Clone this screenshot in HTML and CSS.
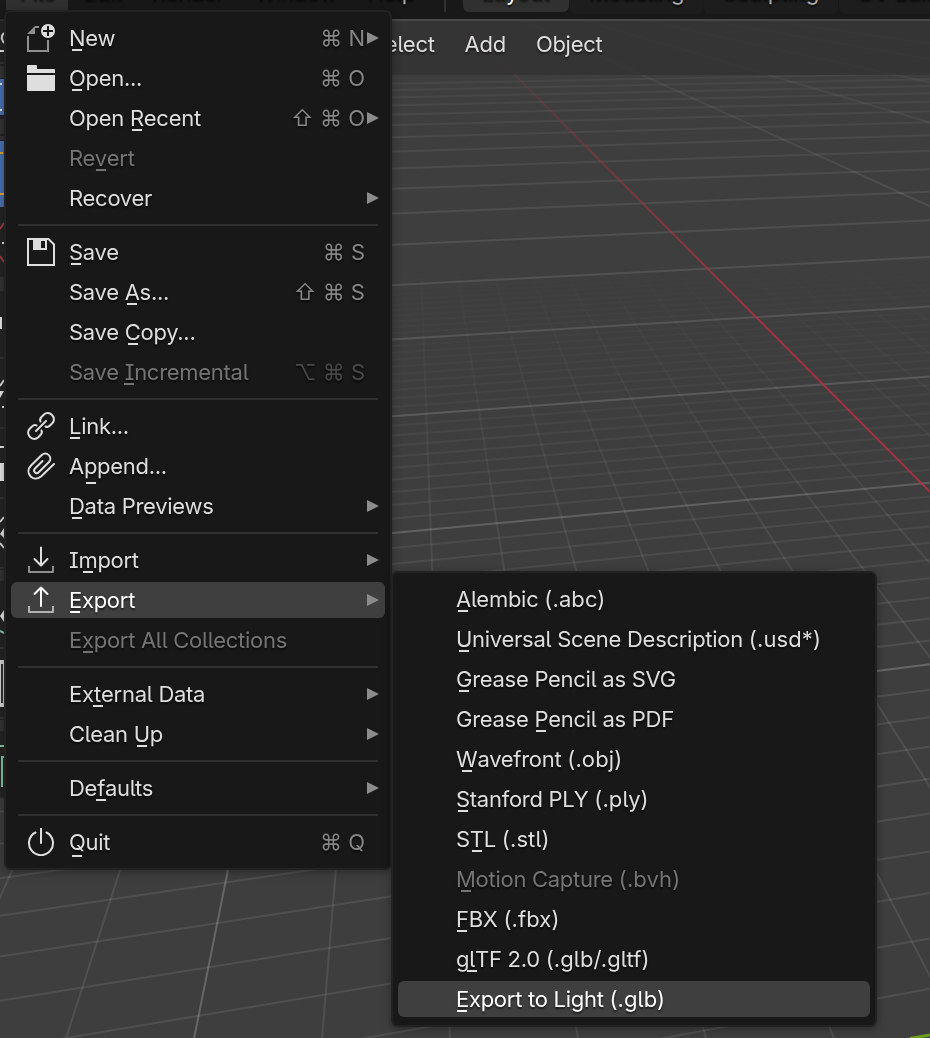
FILE: index.html
```
<!DOCTYPE html>
<html lang="en">
<head>
    <meta charset="UTF-8">
    <meta name="viewport" content="width=device-width, initial-scale=1.0">
    <title>Blender</title>
    <link rel="stylesheet" href="styles.css">
</head>
<body>
    <div class="app">
        <canvas id="grid" class="grid" width="930" height="1038"></canvas>

        <header class="topbar">
            <nav class="topbar-menus">
                <span class="topbar-item active">File</span>
                <span class="topbar-item">Edit</span>
                <span class="topbar-item">Render</span>
                <span class="topbar-item">Window</span>
                <span class="topbar-item">Help</span>
            </nav>
            <nav class="workspaces">
                <span class="tab active">Layout</span>
                <span class="tab">Modeling</span>
                <span class="tab">Sculpting</span>
                <span class="tab">UV Editing</span>
            </nav>
        </header>
        <div class="editor-header">
            <span>Select</span>
            <span>Add</span>
            <span>Object</span>
        </div>

        <!-- Toolbar edge, left of the menu -->
        <svg class="toolbar" width="5" height="850" viewBox="0 19 5 850">
            <path fill="#242424" d="M0 19h5v778H0z"/>
            <path fill="#333" d="M0 19h5v2H0zM0 62h5v2H0zM0 66h5v12H0zM0 119h5v15H0zM0 136h5v4H0zM0 277h5v14H0zM0 357h5v2H0zM0 427h5v2H0zM0 497h5v2H0zM0 567h5v2H0zM0 570h5v11H0zM0 647h5v2H0zM0 717h5v2H0zM0 720h5v11H0zM0 797h5v2H0z"/>
            <path fill="#4772b3" d="M0 79h5v36H0zM0 141h5v66H0z"/>
            <path fill="#e6e6e6" d="M0 83h2v2H0zM0 109h2v2H0zM0 50h4v2H0zM2 242h2v2H2zM0 317h2v12H0zM0 391h4l-4 7zM2 406h2v2H2zM0 446h4v2H0zM0 463h4v18H0zM4 528v10l-4-4zM4 610v12l-4-6z"/>
            <path fill="#e8a020" d="M0 152h3v2H0zM0 193h4v2H0z"/>
            <path fill="none" stroke="#ddd" stroke-width="2" d="M4 33q-3 3-2 6t2 4M0 386l4-6M0 522l4-5M0 543l4 5"/>
            <path fill="none" stroke="#9c3c44" stroke-width="2" d="M0 229l4-6M0 256l4 6"/>
            <path fill="#d0d0d0" d="M0 660h5v47H0z"/>
            <path fill="#333" d="M1 664h2v39H1z"/>
            <path fill="none" stroke="#7fc8a0" stroke-width="2" d="M0 631l4 2M0 746h4M5 757H2v30"/>
        </svg>

        <ul class="menu file-menu">
            <li class="item">
                <svg class="icon" viewBox="0 0 28 28">
                    <path fill="none" stroke="#8f8f8f" stroke-width="2" d="M1 12v15h20V16"/>
                    <path fill="#8f8f8f" d="M0 10l8-8h4v2H8v6z"/>
                    <circle cx="21" cy="7" r="7" fill="#dedede"/>
                    <path stroke="#181818" stroke-width="2" d="M21 2v10M16 7h10"/>
                </svg>
                <span class="label"><u>N</u>ew</span><span class="keys">⌘ N</span><i class="arrow"></i>
            </li>
            <li class="item">
                <svg class="icon" viewBox="0 0 28 28">
                    <path fill="#dedede" d="M1 1h8q1 0 1 1v3h17q1 0 1 1v3H0V2q0-1 1-1zM0 11h28v15q0 1-1 1H1q-1 0-1-1z"/>
                </svg>
                <span class="label"><u>O</u>pen...</span><span class="keys">⌘ O</span>
            </li>
            <li class="item"><span class="label">Open <u>R</u>ecent</span><span class="keys">⇧ ⌘ O</span><i class="arrow"></i></li>
            <li class="item disabled"><span class="label">Re<u>v</u>ert</span></li>
            <li class="item"><span class="label">Recover</span><i class="arrow"></i></li>
            <li class="separator"></li>
            <li class="item">
                <svg class="icon" viewBox="0 0 28 28">
                    <path fill="none" stroke="#dedede" stroke-width="2" d="M1 1h20.500l5.500 5.500V27H1z"/>
                    <path fill="#dedede" fill-rule="evenodd" d="M6 1h14v11H6zM14 3v7h4V3z"/>
                </svg>
                <span class="label"><u>S</u>ave</span><span class="keys">⌘ S</span>
            </li>
            <li class="item"><span class="label">Save <u>A</u>s...</span><span class="keys">⇧ ⌘ S</span></li>
            <li class="item"><span class="label">Save <u>C</u>opy...</span></li>
            <li class="item disabled"><span class="label">Save <u>I</u>ncremental</span><span class="keys">⌥ ⌘ S</span></li>
            <li class="separator"></li>
            <li class="item">
                <svg class="icon line" viewBox="0 0 28 28">
                    <path d="M9 19L19 9M13.500 9.500C12.500 7.500 13 6.500 14.500 5l2.500-2.500C19 .6 22.500.5 25 3s2.400 6 .5 8L23 13.500c-1.500 1.500-3 1.800-4.500 1M14.500 18.500c1 2 .5 3-1 4.500L11 25.500C9 27.400 5.500 27.500 3 25s-2.400-6-.5-8L5 14.500c1.500-1.500 3-1.800 4.500-1"/>
                </svg>
                <span class="label"><u>L</u>ink...</span>
            </li>
            <li class="item">
                <svg class="icon line" viewBox="0 0 28 28">
                    <path d="M15.500 9L8 16.500c-2.600 2.800 1 6.200 3.700 3.700L22 10c4-4.500-2-11.500-7.500-6.800L4 13.500C-3 21 6 31 14 24.500L27 12"/>
                </svg>
                <span class="label">A<u class="low">p</u>pend...</span>
            </li>
            <li class="item"><span class="label"><u>D</u>ata Previews</span><i class="arrow"></i></li>
            <li class="separator"></li>
            <li class="item">
                <svg class="icon line" viewBox="0 0 28 28">
                    <path class="dim" d="M2 20v6h24v-6"/>
                    <path d="M14 1.500V19M7.500 13l6.500 6.500 6.500-6.500"/>
                </svg>
                <span class="label">I<u>m</u>port</span><i class="arrow"></i>
            </li>
            <li class="item active">
                <svg class="icon line" viewBox="0 0 28 28">
                    <path class="dim" d="M2 20v6h24v-6"/>
                    <path d="M14 20V2M7.500 8L14 1.500 20.500 8"/>
                </svg>
                <span class="label"><u>E</u>xport</span><i class="arrow"></i>
            </li>
            <li class="item disabled"><span class="label">E<u>x</u>port All Collections</span></li>
            <li class="separator"></li>
            <li class="item"><span class="label">Ex<u>t</u>ernal Data</span><i class="arrow"></i></li>
            <li class="item"><span class="label">Clean <u>U</u>p</span><i class="arrow"></i></li>
            <li class="separator"></li>
            <li class="item"><span class="label">De<u>f</u>aults</span><i class="arrow"></i></li>
            <li class="separator"></li>
            <li class="item">
                <svg class="icon line" viewBox="0 0 28 28">
                    <path d="M14 .5V15M8.500 4.500a12 12 0 1 0 11 0"/>
                </svg>
                <span class="label"><u class="mid">Q</u>uit</span><span class="keys">⌘ Q</span>
            </li>
        </ul>

        <ul class="menu export-menu">
            <li class="item"><span class="label"><u>A</u>lembic <span class="ext">(.abc)</span></span></li>
            <li class="item"><span class="label"><u>U</u>niversal Scene Description <span class="ext">(.usd*)</span></span></li>
            <li class="item"><span class="label"><u>G</u>rease Pencil as SVG</span></li>
            <li class="item"><span class="label">Grease <u>P</u>encil as PDF</span></li>
            <li class="item"><span class="label"><u>W</u>avefront <span class="ext">(.obj)</span></span></li>
            <li class="item"><span class="label"><u>S</u>tanford PLY <span class="ext">(.ply)</span></span></li>
            <li class="item"><span class="label">S<u>T</u>L <span class="ext">(.stl)</span></span></li>
            <li class="item disabled"><span class="label"><u>M</u>otion Capture <span class="ext">(.bvh)</span></span></li>
            <li class="item"><span class="label"><u>F</u>BX <span class="ext">(.fbx)</span></span></li>
            <li class="item"><span class="label">g<u>l</u>TF 2.0 <span class="ext">(.glb/.gltf)</span></span></li>
            <li class="item active"><span class="label"><u>E</u>xport to Light <span class="ext">(.glb)</span></span></li>
        </ul>
    </div>
    <script src="grid.js"></script>
</body>
</html>
```
FILE: styles.css
```
* {
    box-sizing: border-box;
}
body {
    margin: 0;
    background: #3e3e3e;
    color: #dedede;
    font: 22px/40px Inter, sans-serif;
    font-feature-settings: "cv05", "cv08";
    letter-spacing: -0.28px;
    overflow: hidden;
}
.app {
    position: relative;
    width: 930px;
    height: 1038px;
    overflow: hidden;
}
.grid {
    position: absolute;
    top: 0;
    left: 0;
}

/* Top bar, scrolled half out of the window */
.topbar {
    position: relative;
    display: flex;
    height: 42px;
    margin-top: -23px;
    background: #181818;
    color: #aaa;
    line-height: 30px;
    text-shadow: 0 2px 2px rgba(0, 0, 0, 0.7);
    white-space: nowrap;
    overflow: hidden;
}
.topbar-menus {
    display: flex;
    flex: none;
    gap: 2px;
    width: 446px;
    height: 35px;
    padding-left: 6px;
    border-right: 2px solid #303030;
}
.topbar-item {
    padding: 0 14px;
}
.topbar-item.active {
    width: 62px;
    height: 33px;
    background: #303030;
}
.workspaces {
    display: flex;
    gap: 1px;
    padding-left: 17px;
}
.tab {
    flex: none;
    height: 37px;
    padding: 0 19px;
    background: #1d1d1d;
    border-radius: 0 0 6px 6px;
}
.tab.active {
    height: 35px;
    background: #303030;
    color: #fff;
}
.editor-header {
    position: relative;
    display: flex;
    gap: 30px;
    height: 56px;
    padding-left: 371px;
    border-top: 2px solid #484848;
    background: rgba(48, 48, 48, 0.7);
    line-height: 47px;
    text-shadow: 0 2px 2px rgba(0, 0, 0, 0.5);
}
.toolbar {
    position: absolute;
    top: 19px;
    left: 0;
}

/* Menus */
.menu {
    position: absolute;
    display: flex;
    flex-direction: column;
    margin: 0;
    padding: 6px 4px;
    list-style: none;
    background: #181818;
    border: 2px solid #222;
    border-radius: 7px;
    box-shadow: 0 2px 8px rgba(0, 0, 0, 0.35);
}
.file-menu {
    top: 10px;
    left: 4px;
    width: 388px;
    height: 860px;
}
.export-menu {
    top: 571px;
    left: 391px;
    width: 486px;
    height: 456px;
}
.item {
    position: relative;
    display: flex;
    align-items: center;
    height: 36px;
    margin: 2px 1px;
    padding: 0 6px 0 58px;
    border-radius: 6px;
    text-shadow: 0 2px 2px rgba(0, 0, 0, 0.6);
    white-space: pre;
}
.item.active {
    background: #3f3f3f;
    color: #fff;
}
.item.disabled {
    color: #747474;
}
.item.disabled .keys {
    color: #484848;
}
.item u {
    position: relative;
    text-decoration: none;
}
.item u::after {
    content: "";
    position: absolute;
    left: 50%;
    bottom: 0;
    width: 10px;
    height: 2px;
    margin-left: -5px;
    background: currentColor;
}
.item u.mid::after {
    bottom: -2px;
}
.item u.low::after {
    bottom: -5px;
}
.ext {
    letter-spacing: 0.1px;
}
.icon {
    position: absolute;
    left: 16px;
    top: 4px;
    width: 28px;
    height: 28px;
}
.line {
    fill: none;
    stroke: currentColor;
    stroke-width: 2;
    stroke-linecap: round;
    stroke-linejoin: round;
}
.line .dim {
    opacity: 0.6;
    stroke-linecap: butt;
}
.keys {
    position: absolute;
    right: 20px;
    color: #858585;
    letter-spacing: 0;
}
.arrow {
    margin-left: auto;
    border-left: 12px solid #8c8c8c;
    border-top: 6.5px solid transparent;
    border-bottom: 6.5px solid transparent;
}
.separator {
    height: 14px;
    margin: 0 8px;
    padding: 6px 0;
    background: #303030 content-box;
}
```
FILE: grid.js
```
const ctx = document.getElementById('grid').getContext('2d');
const HORIZON = -31;
const VP_X = 6430;  // where the lines parallel to Y meet
const VP_Y = 409.5; // where the lines parallel to X meet

function line(x1, y1, x2, y2, stroke, width) {
    ctx.strokeStyle = stroke;
    ctx.lineWidth = width;
    ctx.beginPath();
    ctx.moveTo(x1, y1);
    ctx.lineTo(x2, y2);
    ctx.stroke();
}

// Lines fade out towards the horizon
function fade(r, g, b, from, to, alpha) {
    const gradient = ctx.createLinearGradient(0, from, 0, to);
    gradient.addColorStop(0, `rgba(${r}, ${g}, ${b}, 0)`);
    gradient.addColorStop(1, `rgba(${r}, ${g}, ${b}, ${alpha})`);
    return gradient;
}

const fine = fade(255, 255, 255, 250, 640, 0.09);
const coarse = fade(255, 255, 255, -60, 620, 0.21);

for (let n = -19; n < 160; n++) {
    const d = 1000 / (1.773 + n * 0.0463);
    const major = n % 10 === 0;
    if (!major && d < 280) continue;
    const left = HORIZON + d * (VP_X / (VP_X - 392));
    const right = HORIZON + d * ((VP_X - 930) / (VP_X - 392));
    line(0, left, 930, right, major ? coarse : fine, 2);
}

for (let n = -20; n < 60; n++) {
    if (n === 0) continue;
    const slope = 0.9955 + n * 0.1197;
    const major = n % 10 === 0;
    line(VP_Y, HORIZON, VP_Y + slope * 1100, HORIZON + 1100, major ? coarse : fine, 2);
}

// X and Y axes
line(VP_Y, HORIZON, VP_Y + 0.9955 * 1100, HORIZON + 1100, fade(184, 48, 62, 10, 330, 0.85), 2);
line(910, 1038.500, 930, 1035, '#6b9e1c', 3);
```
